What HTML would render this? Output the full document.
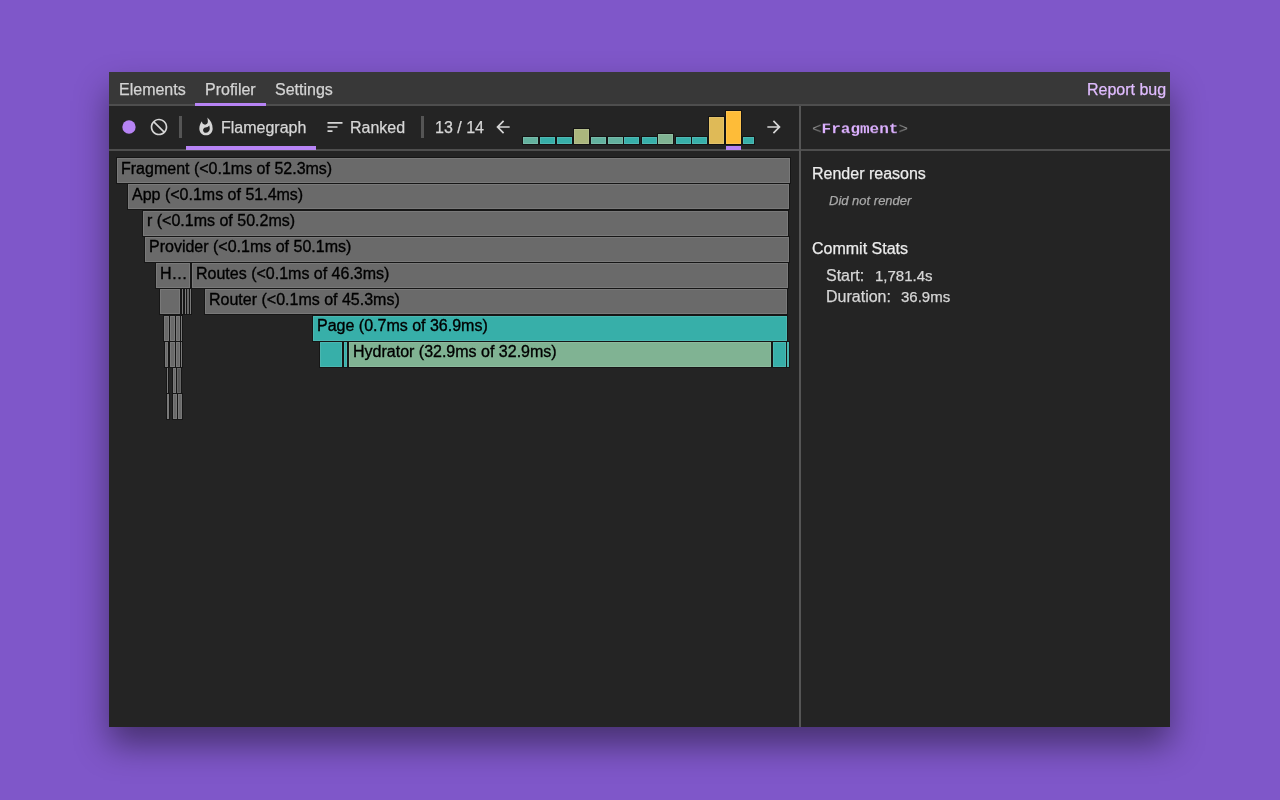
<!DOCTYPE html>
<html><head><meta charset="utf-8">
<style>
html,body{margin:0;padding:0;}
body{width:1280px;height:800px;overflow:hidden;background:#7f57c9;position:relative;font-family:"Liberation Sans",sans-serif;}
.a{position:absolute;}
.win{position:absolute;left:109px;top:72px;width:1061px;height:655px;background:#242424;box-shadow:0 18px 32px rgba(0,0,0,0.44);overflow:hidden;}
.hdr{left:0;top:0;width:1061px;height:32px;background:#383838;}
.hl{background:#4e4e4e;height:2px;}
.t{position:absolute;white-space:nowrap;font-size:16px;line-height:18px;color:#d6d6d6;-webkit-text-stroke:0.25px currentColor;will-change:transform;}
.bar{position:absolute;height:25px;box-shadow:inset 0 0 0 1px rgba(255,255,255,0.1),0 0 0 1px #161616;background:#6e6e6e;overflow:hidden;}
.bar span{position:absolute;left:4px;top:2px;-webkit-text-stroke:0.35px #000;will-change:transform;font-size:16px;line-height:18px;color:#000;white-space:nowrap;}
.g{background:#6e6e6e;}
.tl{background:#37b0aa;}
.hy{background:#85b393;}
.cb{position:absolute;box-shadow:inset 0 0 0 1px rgba(255,255,255,0.12),0 0 0 1px #141414;}
</style></head>
<body>
<div class="win">
  <!-- header tabs -->
  <div class="a hdr"></div>
  <div class="a hl" style="left:0;top:32px;width:1061px;"></div>
  <div class="t" style="left:10px;top:80px;"></div>
  <div class="t" style="left:10px;top:9px;color:#d4d4d4">Elements</div>
  <div class="t" style="left:96px;top:9px;color:#d4d4d4">Profiler</div>
  <div class="t" style="left:166px;top:9px;color:#d4d4d4">Settings</div>
  <div class="a" style="left:86px;top:31px;width:71px;height:3px;background:#b784f5"></div>
  <div class="t" style="left:978px;top:9px;color:#e0bcff">Report bug</div>

  <!-- toolbar -->
  <div class="a hl" style="left:0;top:77px;width:1061px;"></div>
  <div class="a" style="left:690px;top:34px;width:2px;height:621px;background:#555"></div>
  <svg class="a" style="left:10px;top:45px" width="20" height="20" viewBox="0 0 24 24"><path d="M12 4a8 8 0 1 0 0 16a8 8 0 1 0 0-16z" fill="#b784f5"/></svg>
  <svg class="a" style="left:40px;top:45px;transform:scaleX(-1)" width="20" height="20" viewBox="0 0 24 24"><path d="M12 2C6.48 2 2 6.48 2 12s4.48 10 10 10 10-4.48 10-10S17.52 2 12 2zM4 12c0-4.42 3.58-8 8-8 1.85 0 3.55.63 4.9 1.69L5.69 16.9C4.63 15.55 4 13.85 4 12zm8 8c-1.85 0-3.55-.63-4.9-1.69L18.31 7.1C19.37 8.45 20 10.15 20 12c0 4.42-3.58 8-8 8z" fill="#d6d6d6"/></svg>
  <div class="a" style="left:70px;top:44px;width:3px;height:22px;background:#555"></div>
  <svg class="a" style="left:87px;top:45px" width="20" height="20" viewBox="0 0 24 24"><path d="M13.5.67s.74 2.65.74 4.8c0 2.06-1.35 3.73-3.41 3.73-2.07 0-3.63-1.67-3.63-3.73l.03-.36C5.21 7.51 4 10.62 4 14c0 4.42 3.58 8 8 8s8-3.58 8-8C20 8.61 17.41 3.8 13.5.67zM11.71 19c-1.78 0-3.22-1.4-3.22-3.14 0-1.62 1.05-2.76 2.81-3.12 1.77-.36 3.6-1.21 4.62-2.58.39 1.29.59 2.65.59 4.04 0 2.65-2.15 4.8-4.8 4.8z" fill="#d6d6d6"/></svg>
  <div class="t" style="left:112px;top:47px;">Flamegraph</div>
  <div class="a" style="left:77px;top:74px;width:130px;height:4px;background:#b784f5"></div>
  <svg class="a" style="left:216px;top:45px" width="20" height="20" viewBox="0 0 24 24"><path d="M3 18h6v-2H3v2zM3 6v2h18V6H3zm0 7h12v-2H3v2z" fill="#d6d6d6"/></svg>
  <div class="t" style="left:241px;top:47px;">Ranked</div>
  <div class="a" style="left:312px;top:44px;width:3px;height:22px;background:#555"></div>
  <div class="t" style="left:326px;top:47px;">13 / 14</div>
  <svg class="a" style="left:384px;top:45px" width="20" height="20" viewBox="0 0 24 24"><path d="M20 11H7.83l5.59-5.59L12 4l-8 8 8 8 1.41-1.41L7.83 13H20v-2z" fill="#d6d6d6"/></svg>
  <svg class="a" style="left:655px;top:45px" width="20" height="20" viewBox="0 0 24 24"><path d="M12 4l-1.41 1.41L16.17 11H4v2h12.17l-5.58 5.59L12 20l8-8z" fill="#d6d6d6"/></svg>

  <!-- commit chart bars -->
  <div id="chart"><div class="cb" style="left:414px;top:65px;width:15px;height:7px;background:#63b19e"></div><div class="cb" style="left:431px;top:65px;width:15px;height:7px;background:#37afa9"></div><div class="cb" style="left:448px;top:65px;width:15px;height:7px;background:#37afa9"></div><div class="cb" style="left:465px;top:57px;width:15px;height:15px;background:#abb67d"></div><div class="cb" style="left:482px;top:65px;width:15px;height:7px;background:#63b19e"></div><div class="cb" style="left:499px;top:65px;width:15px;height:7px;background:#63b19e"></div><div class="cb" style="left:515px;top:65px;width:15px;height:7px;background:#37afa9"></div><div class="cb" style="left:533px;top:65px;width:15px;height:7px;background:#37afa9"></div><div class="cb" style="left:549px;top:62px;width:15px;height:10px;background:#80b393"></div><div class="cb" style="left:567px;top:65px;width:15px;height:7px;background:#37afa9"></div><div class="cb" style="left:583px;top:65px;width:15px;height:7px;background:#37afa9"></div><div class="cb" style="left:600px;top:45px;width:15px;height:27px;background:#dfba57"></div><div class="cb" style="left:617px;top:39px;width:15px;height:33px;background:#febc38"></div><div class="cb" style="left:634px;top:65px;width:11px;height:7px;background:#37afa9"></div><div class="a" style="left:617px;top:74px;width:15px;height:4px;background:#b784f5"></div></div><!--/chart-->

  <!-- right panel -->
  <div class="a hl" style="left:692px;top:77px;width:369px;"></div>
  <div class="t" style="left:703px;top:48px;transform:scaleY(0.875);transform-origin:0 14.5px;-webkit-text-stroke:0;font-family:'Liberation Mono',monospace;font-weight:bold;color:#dcb0ff"><span style="color:#8a8a8a;font-weight:normal">&lt;</span>Fragment<span style="color:#8a8a8a;font-weight:normal">&gt;</span></div>
  <div class="t" style="left:703px;top:93px;color:#ececec">Render reasons</div>
  <div class="t" style="left:720px;top:120px;font-size:13px;font-style:italic;color:#a8a8a8">Did not render</div>
  <div class="t" style="left:703px;top:168px;color:#ececec">Commit Stats</div>
  <div class="t" style="left:717px;top:195px;color:#d6d6d6">Start:</div><div class="t" style="left:766px;top:195px;font-size:15px;color:#d6d6d6">1,781.4s</div>
  <div class="t" style="left:717px;top:216px;color:#d6d6d6">Duration:</div><div class="t" style="left:792px;top:216px;font-size:15px;color:#d6d6d6">36.9ms</div>

  <!-- flame graph -->
  <div id="flame"><div class="bar" style="left:8px;top:86px;width:673px;background:#6a6a6a"><span style="top:2px">Fragment (&lt;0.1ms of 52.3ms)</span></div><div class="bar" style="left:19px;top:112px;width:661px;background:#6a6a6a"><span style="top:2px">App (&lt;0.1ms of 51.4ms)</span></div><div class="bar" style="left:34px;top:139px;width:645px;background:#6a6a6a"><span style="top:1px">r (&lt;0.1ms of 50.2ms)</span></div><div class="bar" style="left:36px;top:165px;width:644px;background:#6a6a6a"><span style="top:1px">Provider (&lt;0.1ms of 50.1ms)</span></div><div class="bar" style="left:47px;top:191px;width:34px;background:#6a6a6a"><span style="top:2px">H…</span></div><div class="bar" style="left:83px;top:191px;width:596px;background:#6a6a6a"><span style="top:2px">Routes (&lt;0.1ms of 46.3ms)</span></div><div class="bar" style="left:51px;top:217px;width:20px;background:#6a6a6a"></div><div class="bar" style="left:73px;top:217px;width:1px;background:#6a6a6a"></div><div class="bar" style="left:76px;top:217px;width:1px;background:#6a6a6a"></div><div class="bar" style="left:78px;top:217px;width:2px;background:#555"></div><div class="bar" style="left:81px;top:217px;width:1px;background:#6a6a6a"></div><div class="bar" style="left:96px;top:217px;width:582px;background:#6a6a6a"><span style="top:2px">Router (&lt;0.1ms of 45.3ms)</span></div><div class="bar" style="left:55px;top:244px;width:5px;background:#6a6a6a"></div><div class="bar" style="left:61px;top:244px;width:5px;background:#6a6a6a"></div><div class="bar" style="left:67px;top:244px;width:4px;background:#6a6a6a"></div><div class="bar" style="left:72px;top:244px;width:1px;background:#6a6a6a"></div><div class="bar" style="left:204px;top:244px;width:474px;background:#37afa9"><span style="top:1px">Page (0.7ms of 36.9ms)</span></div><div class="bar" style="left:56px;top:270px;width:3px;background:#6a6a6a"></div><div class="bar" style="left:61px;top:270px;width:5px;background:#6a6a6a"></div><div class="bar" style="left:67px;top:270px;width:4px;background:#6a6a6a"></div><div class="bar" style="left:72px;top:270px;width:1px;background:#6a6a6a"></div><div class="bar" style="left:211px;top:270px;width:22px;background:#37afa9"></div><div class="bar" style="left:235px;top:270px;width:3px;background:#37afa9"></div><div class="bar" style="left:240px;top:270px;width:422px;background:#80b393"><span style="top:1px">Hydrator (32.9ms of 32.9ms)</span></div><div class="bar" style="left:664px;top:270px;width:13px;background:#37afa9"></div><div class="bar" style="left:678px;top:270px;width:2px;background:#37afa9"></div><div class="bar" style="left:58px;top:296px;width:1px;background:#6a6a6a"></div><div class="bar" style="left:64px;top:296px;width:3px;background:#6a6a6a"></div><div class="bar" style="left:68px;top:296px;width:4px;background:#555"></div><div class="bar" style="left:58px;top:322px;width:2px;background:#6a6a6a"></div><div class="bar" style="left:64px;top:322px;width:4px;background:#6a6a6a"></div><div class="bar" style="left:69px;top:322px;width:4px;background:#6a6a6a"></div></div><!--/flame-->
</div>
</body></html>
